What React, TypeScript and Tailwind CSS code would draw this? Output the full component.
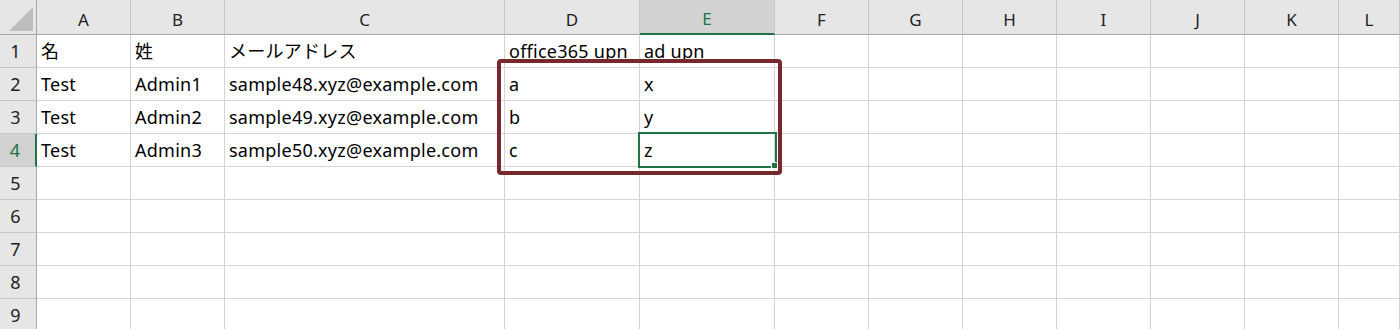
import React from "react";

const cols = ["A", "B", "C", "D", "E", "F", "G", "H", "I", "J", "K", "L"];
const data: string[][] = [
  ["名", "姓", "メールアドレス", "office365 upn", "ad upn"],
  ["Test", "Admin1", "sample48.xyz@example.com", "a", "x"],
  ["Test", "Admin2", "sample49.xyz@example.com", "b", "y"],
  ["Test", "Admin3", "sample50.xyz@example.com", "c", "z"],
];

export default function App() {
  const rows = [1, 2, 3, 4, 5, 6, 7, 8, 9];
  return (
    <div
      className="relative w-[1400px] h-[329px] overflow-hidden bg-white text-black"
      style={{ fontFamily: '"Noto Sans", "Noto Sans CJK JP", sans-serif' }}
    >
      <div className="grid grid-cols-[37px_94px_94px_280px_135px_135px_94px_94px_94px_94px_94px_94px_1fr] grid-rows-[35px_repeat(9,33px)]">
        {/* corner */}
        <div className="relative bg-[#e6e6e6] border-r border-b border-[#a6a6a6]">
          <div className="absolute left-[9px] top-[7px] w-0 h-0 border-l-[24px] border-l-transparent border-b-[24px] border-b-[#bdbdbd]" />
        </div>
        {cols.map((c) => (
          <div
            key={c}
            className={
              c === "E"
                ? "flex items-center justify-center pt-[5px] bg-[#d2d2d2] border-r border-r-[#c6c6c6] border-b-2 border-b-[#217346] text-[#217346] text-[17px]"
                : "flex items-center justify-center pt-[5px] bg-[#e6e6e6] border-r border-r-[#c6c6c6] border-b border-b-[#a6a6a6] text-[#222] text-[17px]"
            }
          >
            {c}
          </div>
        ))}
        {rows.map((r) => (
          <React.Fragment key={r}>
            <div
              className={
                r === 4
                  ? "flex items-center justify-center pr-[5px] bg-[#d2d2d2] border-r-2 border-r-[#217346] border-b border-b-[#c6c6c6] text-[#217346] text-[18px]"
                  : "flex items-center justify-center pr-[5px] bg-[#e6e6e6] border-r border-r-[#a6a6a6] border-b border-b-[#c6c6c6] text-[#222] text-[18px]"
              }
            >
              {r}
            </div>
            {cols.map((c, ci) => (
              <div
                key={c}
                className="flex items-center pl-[4px] pt-[1px] border-r border-b border-[#d4d4d4] text-[18px] tracking-[0.25px] whitespace-nowrap"
              >
                {data[r - 1] && data[r - 1][ci] ? data[r - 1][ci] : ""}
              </div>
            ))}
          </React.Fragment>
        ))}
      </div>

      {/* selection on E4 */}
      <div className="absolute left-[638px] top-[132px] w-[139px] h-[36px] border-2 border-[#217346]" />
      <div className="absolute left-[771px] top-[162px] w-[7px] h-[7px] bg-[#217346] border border-white" />

      {/* red annotation box */}
      <div className="absolute left-[497px] top-[59px] w-[285px] h-[116px] border-4 border-[#78282d] rounded-[4px]" />
    </div>
  );
}
